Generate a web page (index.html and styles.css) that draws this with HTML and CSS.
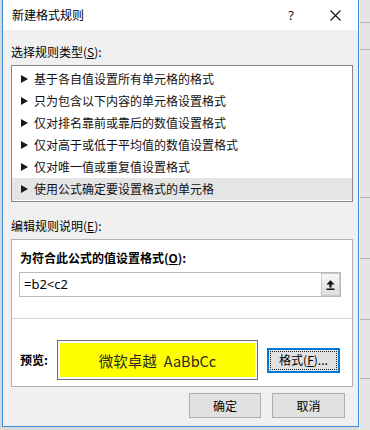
FILE: index.html
```html
<!DOCTYPE html>
<html lang="zh-CN">
<head>
<meta charset="utf-8">
<title>新建格式规则</title>
<link rel="stylesheet" href="styles.css">
</head>
<body>
<div class="screen">
  <div class="edge-left"></div>
  <div class="dialog">
    <div class="titlebar">
      <span class="title">新建格式规则</span>
      <span class="help">?</span>
      <svg class="close" width="11" height="11" viewBox="0 0 11 11"><path d="M0.5 0.5 L10.5 10.5 M10.5 0.5 L0.5 10.5" stroke="#111" stroke-width="1.1" fill="none"/></svg>
    </div>
    <div class="body">
      <div class="label">选择规则类型(<u>S</u>):</div>
      <ul class="rule-list">
        <li class="rule"><span class="tri"></span>基于各自值设置所有单元格的格式</li>
        <li class="rule"><span class="tri"></span>只为包含以下内容的单元格设置格式</li>
        <li class="rule"><span class="tri"></span>仅对排名靠前或靠后的数值设置格式</li>
        <li class="rule"><span class="tri"></span>仅对高于或低于平均值的数值设置格式</li>
        <li class="rule"><span class="tri"></span>仅对唯一值或重复值设置格式</li>
        <li class="rule selected"><span class="tri"></span>使用公式确定要设置格式的单元格</li>
      </ul>
      <div class="label label-second">编辑规则说明(<u>E</u>):</div>
      <div class="desc">
        <div class="desc-top">
          <div class="bold-label formula-label">为符合此公式的值设置格式(<u>O</u>):</div>
          <div class="formula">
            <span class="formula-text">=b2&lt;c2</span>
            <span class="ref-btn"><svg width="9" height="10" viewBox="0 0 9 10"><path d="M4.5 0.3 L8.6 4.6 L5.6 4.6 L5.6 7.6 L3.4 7.6 L3.4 4.6 L0.4 4.6 Z" fill="#111"/><rect x="0.5" y="8.5" width="8" height="1.5" fill="#111"/></svg></span>
          </div>
        </div>
        <div class="desc-bottom">
          <span class="bold-label preview-label">预览:</span>
          <div class="preview"><div class="preview-fill"><span>微软卓越</span><span class="latin">AaBbCc</span></div></div>
          <button class="btn format-btn"><span class="focus">格式(<u>F</u>)...</span></button>
        </div>
      </div>
      <div class="actions">
        <button class="btn ok">确定</button>
        <button class="btn cancel">取消</button>
      </div>
    </div>
  </div>
  <div class="side">
    <div class="seg s1"></div>
    <div class="seg s2"></div>
    <div class="seg s3"></div>
    <div class="seg s4"></div>
    <div class="seg s5"></div>
    <div class="seg s6"></div>
  </div>
</div>
</body>
</html>
```
FILE: styles.css
```css
* { box-sizing: border-box; }
html, body { margin: 0; padding: 0; }
body {
  width: 370px;
  height: 430px;
  overflow: hidden;
  background: #dadada;
  font-family: "Noto Sans CJK SC", "Noto Sans", sans-serif;
  font-size: 12px;
  color: #000;
}
u { text-decoration: underline; text-underline-offset: 1px; }

.screen { display: flex; height: 430px; }
.edge-left { width: 2px; flex: none; background: #d8d8d8; height: 427px; }

.dialog {
  width: 357px;
  height: 427px;
  flex: none;
  background: #f0f0f0;
  border: 1px solid #3d8ad6;
  border-top: none;
  display: flex;
  flex-direction: column;
}

.titlebar {
  height: 30px;
  flex: none;
  background: #fff;
  display: flex;
  align-items: center;
  padding-left: 9px;
  padding-right: 17px;
}
.title { flex: 1; font-size: 12px; line-height: 16px; }
.help { font-family: "Noto Sans", sans-serif; font-size: 13px; line-height: 16px; margin-right: 36px; color: #111; }
.close { display: block; }

.body { padding: 14px 5px 0 8px; }

.label { line-height: 16px; height: 16px; margin-bottom: 5px; }
.label-second { margin-top: 16px; }

.rule-list {
  list-style: none;
  margin: 0;
  padding: 2px 0 1px;
  height: 137px;
  background: #fff;
  border: 1px solid #828790;
}
.rule {
  height: 22px;
  line-height: 22px;
  display: flex;
  align-items: center;
  padding-left: 9px;
  color: #111;
}
.rule.selected { background: #e5e5e5; }
.tri {
  width: 0;
  height: 0;
  border-left: 7px solid #1a1a1a;
  border-top: 4px solid transparent;
  border-bottom: 4px solid transparent;
  margin-right: 6px;
}

.desc {
  height: 148px;
  background: #fff;
  border: 1px solid #b2b2b2;
}
.desc-top {
  height: 79px;
  padding: 10px 11px 0 7px;
  border-bottom: 1px solid #d6d6d6;
}
.bold-label { font-weight: bold; line-height: 16px; }
.formula-label { margin-bottom: 6px; padding-left: 1px; }
.formula {
  height: 25px;
  border: 1px solid #b9b9b9;
  display: flex;
  align-items: stretch;
  padding: 0 0 0 4px;
  background: #fff;
}
.formula-text {
  flex: 1;
  font-family: "Noto Sans", sans-serif;
  font-size: 13px;
  line-height: 23px;
}
.ref-btn {
  width: 19px;
  display: flex;
  align-items: center;
  justify-content: center;
  background: linear-gradient(#f7f7f7, #dedede);
  border: 1px solid #c9c9c9;
}

.desc-bottom {
  display: flex;
  align-items: center;
  padding: 21px 0 6px 8px;
}
.preview-label { width: 37px; flex: none; }
.preview {
  width: 201px;
  height: 40px;
  border: 1px solid #6a6a6a;
  padding: 2px;
  background: #fafafa;
}
.preview-fill {
  height: 100%;
  background: #ffff00;
  display: flex;
  align-items: center;
  justify-content: center;
  font-size: 14.5px;
  color: #2a2a1a;
}
.latin { margin-left: 7px; }

.btn {
  font-family: "Noto Sans CJK SC", "Noto Sans", sans-serif;
  font-size: 12px;
  color: #000;
  background: #e1e1e1;
  border: 1px solid #adadad;
  height: 25px;
  padding: 0;
  margin: 0;
  display: flex;
  align-items: center;
  justify-content: center;
}
.format-btn {
  width: 73px;
  margin-left: 9px;
  border: 2px solid #0078d7;
  padding: 1px;
}
.focus {
  width: 100%;
  height: 100%;
  border: 1px dotted #222;
  display: flex;
  align-items: center;
  justify-content: center;
  line-height: 16px;
}

.actions {
  display: flex;
  justify-content: flex-end;
  gap: 11px;
  margin-top: 6px;
  padding-right: 8px;
}
.ok { width: 72px; }
.cancel { width: 73px; }

.side {
  flex: 1;
  display: flex;
  flex-direction: column;
  background: #e4e4e4;
  border-left: 1px solid #f4f4f4;
}
.seg { border-bottom: 1px solid #b4b4b4; flex: none; }
.s1 { height: 23px; }
.s2 { height: 27px; }
.s3 { height: 148px; }
.s4 { height: 61px; }
.s5 { height: 61px; }
.s6 { height: 59px; }
```
